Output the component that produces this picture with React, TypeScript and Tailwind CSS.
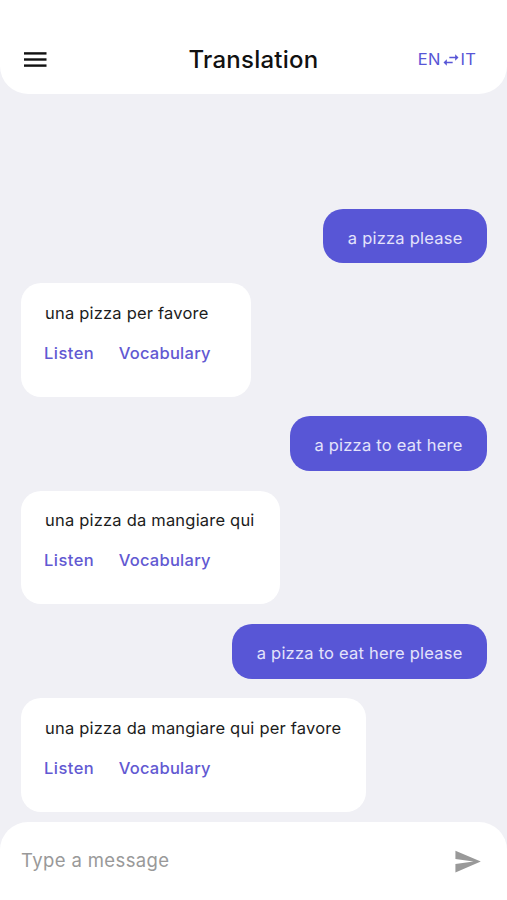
import React, { useState } from 'react';
import { MdSend, MdSwapHoriz } from 'react-icons/md';

interface Message {
    id: number;
    original: string;
    translated: string;
}

const messages: Message[] = [
    { id: 1, original: 'a pizza please', translated: 'una pizza per favore' },
    { id: 2, original: 'a pizza to eat here', translated: 'una pizza da mangiare qui' },
    { id: 3, original: 'a pizza to eat here please', translated: 'una pizza da mangiare qui per favore' },
];

function Header() {
    return (
        <header className="flex h-[94px] items-start justify-between rounded-b-[28px] bg-white pt-[44px] pl-6 pr-[31px]">
            <button className="flex h-8 w-[67px] items-center" aria-label="Menu">
                <svg width="23" height="16" viewBox="0 0 23 16" fill="#111">
                    <rect x="0" y="0.2" width="22.5" height="2.4" />
                    <rect x="0" y="6.3" width="22.5" height="2.4" />
                    <rect x="0" y="12.4" width="22.5" height="2.4" />
                </svg>
            </button>
            <h1 className="text-[24px] leading-8 font-medium tracking-[0.25px] text-[#111]">Translation</h1>
            <button className="flex h-8 w-[60px] items-center justify-end text-[16.5px] text-[#5856d6]">
                <span className="-mt-0.5">EN</span>
                <MdSwapHoriz className="shrink-0" size={20} />
                <span className="-mt-0.5">IT</span>
            </button>
        </header>
    );
}

function Conversation({ message }: { message: Message }) {
    return (
        <>
            <div className="flex h-[54.5px] items-center self-end rounded-[20px] bg-[#5856d6] px-[24.5px] pt-1 tracking-[0.22px] text-[#e4e3fb]">
                {message.original}
            </div>
            <div className="h-[113.7px] self-start rounded-[20px] bg-white pl-[24.5px] pr-[25px] pt-[17.5px]">
                <p className="leading-6 tracking-[0.2px] text-[#1c1c1c]">{message.translated}</p>
                <div className="-ml-px mt-4 flex gap-[24.5px] pr-[15px] leading-6 font-medium text-[#6259d2]">
                    <button className="tracking-[0.45px]">Listen</button>
                    <button className="tracking-[0.25px]">Vocabulary</button>
                </div>
            </div>
        </>
    );
}

function App() {
    const [text, setText] = useState('');

    return (
        <div className="flex h-[900px] w-[507px] flex-col overflow-hidden bg-[#f0f0f5] font-['Inter',sans-serif] text-[16.5px] tracking-[0.2px]">
            <Header />
            <main className="flex flex-1 flex-col gap-[19.7px] pl-[20.5px] pr-5 pt-[114.9px]">
                {messages.map((message) => (
                    <Conversation key={message.id} message={message} />
                ))}
            </main>
            <footer className="flex h-[78px] shrink-0 items-center rounded-t-[28px] bg-white pl-[21px] pr-[25px]">
                <input
                    className="min-w-0 flex-1 text-[18.5px] tracking-[0.38px] text-[#1c1c1c] outline-none placeholder:text-[#999]"
                    placeholder="Type a message"
                    value={text}
                    onChange={(e) => setText(e.target.value)}
                />
                <button aria-label="Send" className="text-[#999]">
                    <MdSend size={29} />
                </button>
            </footer>
        </div>
    );
}

export default App;
